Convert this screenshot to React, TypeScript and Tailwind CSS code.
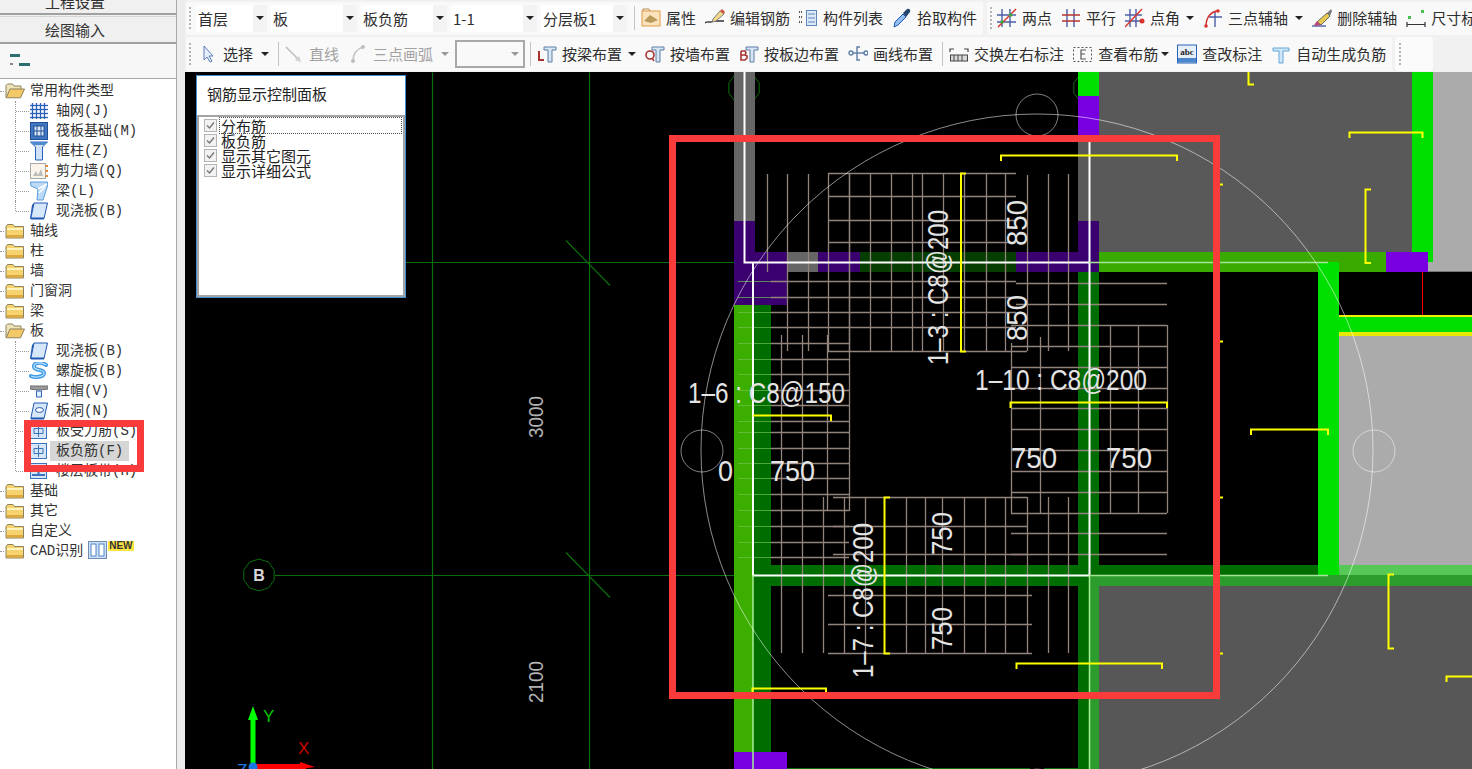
import React from "react";

const CJK = '"Noto Sans CJK SC", "Noto Sans", sans-serif';
const TREE = '"Liberation Mono", "Noto Sans CJK SC", monospace';

/* ---------- small icons ---------- */
const S = ({ children, w = 20, h = 20 }: { children: React.ReactNode; w?: number; h?: number }) => (
  <svg width={w} height={h} viewBox={`0 0 ${w} ${h}`} className="shrink-0 block" fill="none">{children}</svg>
);

const FolderClosed = () => (
  <svg width="20" height="16" viewBox="0 0 20 16" className="block shrink-0">
    <path d="M1 3.5 L2.5 1.5 H8 L9.5 3.5 H18.5 V15 H1 Z" fill="#f6d36f" stroke="#8d8260" strokeWidth="1" />
    <rect x="2" y="5" width="16" height="2" fill="#fff3bd" />
    <rect x="2" y="12" width="16" height="2.4" fill="#dca93a" />
  </svg>
);
const FolderOpen = () => (
  <svg width="20" height="16" viewBox="0 0 20 16" className="block shrink-0">
    <path d="M1 14.5 V2.5 L2.5 1 H7.5 L9 3 H16 V6" fill="#efe3b8" stroke="#8d8260" strokeWidth="1" />
    <path d="M1.2 14.8 L5 6 H19.5 L15.5 14.8 Z" fill="#f3c968" stroke="#8d8260" strokeWidth="1" />
  </svg>
);

const blue = "#2a62b8";
const TAxis = () => (
  <S w={18} h={18}>
    {[2, 6, 10, 14].map((x) => <path key={x} d={`M${x + .5} 1V17`} stroke={blue} strokeWidth="1.3" />)}
    {[3, 7, 11, 15].map((y) => <path key={y} d={`M0 ${y + .5}H18`} stroke={blue} strokeWidth="1.3" />)}
  </S>
);
const TRaft = () => (
  <S w={18} h={18}>
    <rect x=".5" y=".5" width="17" height="17" fill="#3f78c0" stroke="#204f96" />
    <rect x="4" y="4" width="10" height="10" fill="#dbe9f8" stroke="#204f96" />
    <path d="M7 4V14M11 4V14M4 9H14" stroke="#204f96" />
  </S>
);
const TColumn = () => (
  <S w={18} h={20}>
    <path d="M.5 1H17.5L12.5 6V19H5.5V6Z" fill="#cfe2f7" stroke="#2a62b8" />
    <path d="M.5 1H17.5L14 4H4Z" fill="#4d8ad2" />
  </S>
);
const TWall = () => (
  <S w={18} h={18}>
    <rect x=".5" y="1.5" width="15" height="15" fill="#fbf4ea" stroke="#a8a8a8" />
    <path d="M3 14L6 9L8 13L11 7L13 14Z" fill="#bdbdbd" />
    <path d="M15.5 4H18M15.5 9H18M15.5 14H18" stroke="#e08a3a" strokeWidth="2" />
  </S>
);
const TBeam = () => (
  <S w={18} h={20}>
    <path d="M.5 1H17.5V5L13 19H7L8 8L1 5Z" fill="#bcd9f6" stroke="#5a9de0" />
    <path d="M8 8L17 3M9 12L15 6" stroke="#ffffff" strokeWidth="1.5" />
  </S>
);
const TSlab = () => (
  <S w={18} h={18}>
    <path d="M4 1H17.5L14 16.5H.8Z" fill="#d7e7fa" stroke="#1f58b4" />
    <path d="M.8 16.5L4 1L2 3L0 17Z" fill="#1f58b4" />
    <path d="M1 16.5H14" stroke="#1f58b4" strokeWidth="2" />
  </S>
);
const TSpiral = () => (
  <S w={20} h={18}>
    <path d="M17 3C12 -1 4 1 5 5S15 7 15 11S6 16 2 14" stroke="#3f9be8" strokeWidth="4" strokeLinecap="round" />
    <path d="M17 3C12 -1 4 1 5 5S15 7 15 11S6 16 2 14" stroke="#bfe2fb" strokeWidth="1.2" />
  </S>
);
const TCap = () => (
  <S w={18} h={18}>
    <path d="M0 4H18V7L11 8H7L0 7Z" fill="#9a9a9a" stroke="#6d6d6d" />
    <path d="M6.5 9H11.5V15H6.5Z" fill="#e1eefc" stroke="#2a62b8" />
  </S>
);
const THole = () => (
  <S w={18} h={18}>
    <path d="M4 1H17.5L14 16.5H.8Z" fill="#d7e7fa" stroke="#1f58b4" />
    <ellipse cx="9.5" cy="8" rx="4" ry="2.4" fill="#fff" stroke="#1f58b4" />
    <path d="M1 16.5H14" stroke="#1f58b4" strokeWidth="2" />
  </S>
);
const TRebar = () => (
  <S w={18} h={18}>
    <rect x=".5" y="1.5" width="16" height="15" fill="#d5e6f8" stroke="#3a72bc" />
    <path d="M4 6.5H13V11.5H4ZM8.5 3V15" stroke="#3a72bc" />
  </S>
);
const TBand = () => (
  <S w={18} h={18}>
    <rect x=".5" y="1.5" width="16" height="15" fill="#d5e6f8" stroke="#3a72bc" />
    <path d="M2 5H15M2 13H15M8.5 5V13" stroke="#3a72bc" strokeWidth="2" />
  </S>
);

const G = ({ c, d, sw = 1.4 }: { c: string; d: string; sw?: number }) => <path d={d} stroke={c} strokeWidth={sw} fill="none" />;

const IProp = () => (
  <S>
    <rect x="1" y="3" width="18" height="15" fill="#fbe3bd" stroke="#e29a45" />
    <path d="M2 3V1H8L9 3" stroke="#b98a4a" />
    <path d="M3 13L9 7L17 12L10 15Z" fill="#b89a5a" />
  </S>
);
const IEdit = () => (
  <S w={21}>
    <G c="#333" d="M0 15C3 12 5 16 8 13L19 13" />
    <path d="M8 11L15 3L19 6L11 13L7 14Z" fill="#f0d78a" stroke="#7d7d7d" />
    <path d="M15 3L17 1L20 4L19 6Z" fill="#d0523c" />
  </S>
);
const IList = () => (
  <S>
    <path d="M1 4H4M1 9H4M1 14H4" stroke="#555" strokeDasharray="1 1" strokeWidth="2" />
    <rect x="8.5" y="2.5" width="10" height="15" fill="#dbe9f8" stroke="#5f86b8" />
    <path d="M10 6H17M10 10H17M10 14H17" stroke="#5f86b8" />
  </S>
);
const IPick = () => (
  <S>
    <path d="M2 19L3 14L11 6L14 9L6 17Z" fill="#8fc0f0" stroke="#1f58b4" />
    <path d="M11 5L15 1C17 0 19 2 18 4L14 9Z" fill="#27466f" />
  </S>
);
const ITwoPts = () => (
  <S>
    <G c="#4d5da8" d="M5 1V19M13 1V19M0 7H19M0 14H19" />
    <G c="#d8322b" d="M1 19L19 1" />
    <rect x="3.5" y="12.5" width="3" height="3" fill="#3caa3c" /><rect x="12" y="5.5" width="3" height="3" fill="#3caa3c" />
  </S>
);
const IParallel = () => (
  <S>
    <G c="#4d5da8" d="M6 1V19M13 1V19" /><G c="#b5362f" d="M1 7H19M1 13H19" />
  </S>
);
const IAngle = () => (
  <S>
    <G c="#4d5da8" d="M5 1V19M11 1V19M0 7H17M0 13H17" />
    <G c="#d8322b" d="M0 19L17 1" /><circle cx="17" cy="13" r="2.5" fill="#d8322b" />
  </S>
);
const IArc = () => (
  <S>
    <G c="#4d5da8" d="M12 4V19M6 9H19" />
    <G c="#d8322b" d="M3 18C3 9 8 4 14 3" />
    <circle cx="3" cy="18" r="1.8" fill="#d8322b" /><circle cx="15" cy="3" r="1.8" fill="#d8322b" />
  </S>
);
const IErase = () => (
  <S w={22}>
    <path d="M1 18H15" stroke="#4d5da8" strokeWidth="1.4" />
    <path d="M6 14L16 5L19 8L10 17Z" fill="#e8c84f" stroke="#666" />
    <path d="M16 5L20 1L21 3L19 8Z" fill="#7d7d7d" />
    <path d="M3 17L6 13L10 17L5 18Z" fill="#b64a78" />
  </S>
);
const IDim = () => (
  <S>
    <rect x="15" y="2" width="3" height="3" fill="#4cc24c" /><rect x="2" y="8" width="3" height="3" fill="#4cc24c" />
    <G c="#333" d="M1 14V19M19 14V19M1 16.5H19" sw={1.2} />
  </S>
);
const ISelect = () => (
  <S>
    <path d="M6 2L6 16L9 13L12 18L14 17L11 12L15 12Z" fill="#e4eefc" stroke="#5f7fb8" />
  </S>
);
const ILine = () => <S><G c="#bfbfbf" d="M2 3L16 17" sw={1.6} /><path d="M17 18L11 16L15 12Z" fill="#cfcfcf" /></S>;
const IArcMuted = () => (
  <S>
    <G c="#c4c4c4" d="M5 17C5 10 9 5 15 3" sw={1.6} />
    <circle cx="5" cy="17" r="2" fill="#bdbdbd" /><circle cx="15" cy="3" r="2" fill="#bdbdbd" />
  </S>
);
const Pillar = ({ ch, c = "#a83232" }: { ch: "L" | "Q" | "B"; c?: string }) => (
  <S>
    <path d="M7 3H19V6H15V18H11V6H7Z" fill="#d8e5f3" stroke="#5c7ea8" />
    {ch === "L" && <G c={c} d="M2 7V16H7" sw={2} />}
    {ch === "Q" && <><circle cx="5" cy="11" r="4" stroke={c} strokeWidth="1.6" /><G c={c} d="M7 14L9 17" /></>}
    {ch === "B" && <G c={c} d="M2 7V16H6L8 14V12L6 11H2M6 11L7 9L6 7H2" sw={1.6} />}
  </S>
);
const IDrawLine = () => (
  <S>
    <circle cx="3" cy="9" r="2" stroke="#5c7ea8" strokeWidth="1.4" /><circle cx="18" cy="9" r="2" stroke="#5c7ea8" strokeWidth="1.4" />
    <G c="#5c7ea8" d="M5 9H16" /><G c="#5c7ea8" d="M12 3H9V16H12" />
  </S>
);
const ISwap = () => (
  <S>
    <rect x="1.5" y="11" width="17" height="6" fill="#d9d9d9" stroke="#444" />
    <G c="#444" d="M5 11V17M9 11V17M13 11V17" sw={1} />
    <G c="#444" d="M1 8V5H5M19 8V5H15" sw={1.2} />
  </S>
);
const IView = () => (
  <S>
    <rect x=".5" y="3.5" width="18" height="14" stroke="#555" strokeDasharray="2 2" />
    <G c="#555" d="M13 6H8V15H13M8 10H12" sw={1.2} />
  </S>
);
const IAbc = () => (
  <svg width="20" height="20" viewBox="0 0 20 20" className="shrink-0 block">
    <rect x=".5" y="1" width="19" height="18" fill="#e5effa" stroke="#2a62b8" />
    <rect x="1" y="14" width="18" height="4.5" fill="#4b86cc" />
    <text x="10" y="11" textAnchor="middle" fontSize="9" fontWeight="700" fontFamily='"Liberation Serif", serif' fill="#1d1d1d">abc</text>
  </svg>
);
const IAuto = () => (
  <S>
    <path d="M2 4H18V7H12V19H8V7H2Z" fill="#cfe6f7" stroke="#62a7d8" />
  </S>
);

/* ---------- toolbar ---------- */
const Grip = ({ cls = "" }: { cls?: string }) => (
  <div className={`flex flex-col gap-[2px] w-[2px] shrink-0 ${cls}`}>
    {[0, 1, 2, 3, 4, 5].map((i) => <span key={i} className="block w-[2px] h-[2px] bg-[#b4b4b4]" />)}
  </div>
);
const Sep = ({ cls = "" }: { cls?: string }) => <div className={`w-px h-[24px] bg-[#c4c4c4] shrink-0 ${cls}`} />;
const Arrow = ({ muted = false, cls = "" }: { muted?: boolean; cls?: string }) => (
  <span className={`block w-0 h-0 border-x-[4px] border-x-transparent border-t-[4px] shrink-0 ${muted ? "border-t-[#999]" : "border-t-[#222]"} ${cls}`} />
);
const Tool = ({ icon, label, muted = false, arrow = "", arrowMuted = false }: { icon: React.ReactNode; label: string; muted?: boolean; arrow?: string; arrowMuted?: boolean }) => (
  <div className="flex items-center shrink-0">
    <div className="w-[20px] flex justify-center">{icon}</div>
    <span className={`ml-[5px] text-[15px] leading-[20px] whitespace-nowrap ${muted ? "text-[#a2a2a2]" : "text-[#2e2e2e]"}`}>{label}</span>
    {arrow && <Arrow muted={arrowMuted} cls={arrow} />}
  </div>
);
const Drop = ({ label, w }: { label: string; w: string }) => (
  <div className={`flex h-[27px] bg-white ${w}`}>
    <span className="flex-1 pl-[2px] text-[15px] leading-[27px] text-[#2e2e2e]">{label}</span>
    <span className="w-[14px] bg-[#f3f3f3] flex items-center justify-center"><Arrow /></span>
  </div>
);

const Toolbars = () => (
  <div className="h-[72px] shrink-0 bg-[#f1f1f1] overflow-hidden" style={{ fontFamily: CJK }}>
    <div className="h-[36px] flex items-center">
      <div className="ml-px pl-[3px] pr-[6px] h-[33px] flex items-center gap-[9px] bg-[#f9f9f9] rounded-[3px] shrink-0">
        <Grip cls="mr-[-4px]" />
        <div className="flex gap-[4px] mr-[-2px]">
          <Drop label="首层" w="w-[71px]" />
          <Drop label="板" w="w-[86px]" />
          <Drop label="板负筋" w="w-[86px]" />
          <Drop label="1-1" w="w-[86px]" />
          <Drop label="分层板1" w="w-[86px]" />
        </div>
        <Sep cls="mr-[-3px]" />
        <Tool icon={<IProp />} label="属性" />
        <Tool icon={<IEdit />} label="编辑钢筋" />
        <div className="ml-[-1px]"><Tool icon={<IList />} label="构件列表" /></div>
        <Tool icon={<IPick />} label="拾取构件" />
      </div>
      <div className="ml-[4px] pl-[3px] h-[33px] flex items-center gap-[9px] bg-[#f9f9f9] rounded-[3px] shrink-0">
        <Grip cls="mr-[-4px]" />
        <Tool icon={<ITwoPts />} label="两点" />
        <Tool icon={<IParallel />} label="平行" />
        <Tool icon={<IAngle />} label="点角" arrow="ml-[6px]" />
        <Tool icon={<IArc />} label="三点辅轴" arrow="ml-[7px]" />
        <Tool icon={<IErase />} label="删除辅轴" />
        <Tool icon={<IDim />} label="尺寸标注" />
      </div>
    </div>
    <div className="h-[36px] flex items-center">
      <div className="ml-px pl-[3px] pr-[6px] h-[34px] flex items-center gap-[9px] bg-[#f9f9f9] rounded-[3px] shrink-0">
        <Grip cls="mr-[-2px]" />
        <Tool icon={<ISelect />} label="选择" arrow="ml-[8px]" />
        <Sep cls="mr-[-4px]" />
        <Tool icon={<ILine />} label="直线" muted />
        <Tool icon={<IArcMuted />} label="三点画弧" muted arrow="ml-[8px]" arrowMuted />
        <div className="w-[70px] h-[28px] border-2 border-[#a8a8a8] bg-[#f9f9f9] flex items-center justify-end pr-[4px] mr-[-4px] ml-[-3px] shrink-0"><Arrow muted /></div>
        <Sep cls="mr-[-3px]" />
        <Tool icon={<Pillar ch="L" />} label="按梁布置" arrow="ml-[6px]" />
        <Tool icon={<Pillar ch="Q" />} label="按墙布置" />
        <Tool icon={<Pillar ch="B" />} label="按板边布置" />
        <Tool icon={<IDrawLine />} label="画线布置" />
        <Sep cls="mr-[-3px]" />
        <Tool icon={<ISwap />} label="交换左右标注" />
        <Tool icon={<IView />} label="查看布筋" arrow="ml-[3px]" />
        <div className="ml-[-1px]"><Tool icon={<IAbc />} label="查改标注" /></div>
        <Tool icon={<IAuto />} label="自动生成负筋" />
      </div>
      <div className="ml-[3px] pl-[4px] w-[38px] h-[34px] flex items-center bg-[#fbfbfb] rounded-[3px] shrink-0">
        <Grip />
      </div>
    </div>
  </div>
);

/* ---------- left tree ---------- */
type Child = { icon: React.ReactNode; label: string; selected?: boolean };
const Folder = ({ label, open = false }: { label: string; open?: boolean }) => (
  <div className="h-[20px] flex items-center">
    <span className="w-[4px] border-t border-dotted border-[#999] shrink-0" />
    <span className="ml-[1px]">{open ? <FolderOpen /> : <FolderClosed />}</span>
    <span className="ml-[5px] text-[14px] leading-[20px] text-[#333] whitespace-nowrap">{label}</span>
  </div>
);
const Kids = ({ items }: { items: Child[] }) => (
  <div>
    {items.map((it, i) => (
      <div key={it.label + i} className="h-[20px] flex items-center pl-[15px]">
        <span className={`w-0 border-l border-dotted border-[#999] shrink-0 self-start ${i === items.length - 1 ? "h-[10px]" : "h-[20px]"}`} />
        <span className="w-[13px] border-t border-dotted border-[#999] shrink-0" />
        <span className="w-[20px] flex justify-center shrink-0">{it.icon}</span>
        <span className={`ml-px w-[79px] pl-[6px] text-[14px] leading-[20px] text-[#333] whitespace-nowrap ${it.selected ? "bg-[#d6d6d6]" : ""}`}>{it.label}</span>
      </div>
    ))}
  </div>
);

const Sidebar = () => (
  <div className="w-[185px] shrink-0 h-full bg-[#f0f0f0] flex" style={{ fontFamily: TREE }}>
    <div className="w-[177px] h-full flex flex-col border-r border-[#a9a9a9]">
      <div className="h-[15px] overflow-hidden border-b-2 border-[#a0a0a0] bg-[#f0f0f0] flex items-end justify-center pr-[26px]">
        <span className="text-[15px] leading-[20px] text-[#333] translate-y-[-1px]" style={{ fontFamily: CJK }}>工程设置</span>
      </div>
      <div className="h-[28px] mt-px border-t border-[#d5d5d5] border-b-2 border-b-[#a0a0a0] bg-[#f0f0f0] flex items-center justify-center pr-[26px]">
        <span className="text-[15px] leading-[20px] text-[#333]" style={{ fontFamily: CJK }}>绘图输入</span>
      </div>
      <div className="h-[34px] bg-[#f7f7f7] flex items-center pl-[10px]">
        <svg width="22" height="14" viewBox="0 0 22 14"><rect y="0" width="10" height="3" fill="#2d6e6e" /><rect x="9" y="9" width="11" height="3" fill="#2d6e6e" /><rect x="0" y="9" width="3" height="2" fill="#888" /></svg>
      </div>
      <div className="flex-1 bg-white border-t border-[#a9a9a9] relative pt-[2px] overflow-hidden">
        <Folder label="常用构件类型" open />
        <Kids items={[
          { icon: <TAxis />, label: "轴网(J)" },
          { icon: <TRaft />, label: "筏板基础(M)" },
          { icon: <TColumn />, label: "框柱(Z)" },
          { icon: <TWall />, label: "剪力墙(Q)" },
          { icon: <TBeam />, label: "梁(L)" },
          { icon: <TSlab />, label: "现浇板(B)" },
        ]} />
        <Folder label="轴线" />
        <Folder label="柱" />
        <Folder label="墙" />
        <Folder label="门窗洞" />
        <Folder label="梁" />
        <Folder label="板" open />
        <Kids items={[
          { icon: <TSlab />, label: "现浇板(B)" },
          { icon: <TSpiral />, label: "螺旋板(B)" },
          { icon: <TCap />, label: "柱帽(V)" },
          { icon: <THole />, label: "板洞(N)" },
          { icon: <TRebar />, label: "板受力筋(S)" },
          { icon: <TRebar />, label: "板负筋(F)", selected: true },
          { icon: <TBand />, label: "楼层板带(H)" },
        ]} />
        <Folder label="基础" />
        <Folder label="其它" />
        <Folder label="自定义" />
        <div className="h-[20px] flex items-center">
          <span className="w-[4px] border-t border-dotted border-[#999] shrink-0" />
          <span className="ml-[1px]"><FolderClosed /></span>
          <span className="ml-[5px] text-[14px] leading-[20px] text-[#333] whitespace-nowrap">CAD识别</span>
          <span className="ml-[5px] mt-[-2px]">
            <svg width="19" height="18" viewBox="0 0 19 18" className="block"><rect x=".5" y=".5" width="18" height="17" fill="#cfe0f4" stroke="#6d8db5" /><rect x="3" y="3" width="5" height="12" fill="#fff" stroke="#4f86c6" /><rect x="11" y="3" width="5" height="12" fill="#fff" stroke="#4f86c6" /></svg>
          </span>
          <span className="self-start ml-px bg-[#ffe640] text-[10px] leading-[10px] font-bold text-[#333] px-px" style={{ fontFamily: '"Liberation Sans", sans-serif' }}>NEW</span>
        </div>
        {/* annotation drawn over the tree */}
        <div className="absolute left-[24px] top-[341px] w-[120px] h-[52px] border-[7px] border-[#f93b3b]" />
      </div>
    </div>
    <div className="flex-1 bg-[#ececec]" />
  </div>
);

/* ---------- CAD canvas (a drawing) ---------- */
const GRAY = "#595959", LIGHT = "#ababab", BRIGHT = "#00e000", MID = "#38aa00", DARK = "#006d00";
const PUR = "#7800e0", DPUR = "#3a0070", LINE = "#92837d", YEL = "#ffff00", GRID = "#0a6e0a";

const fills: [number, number, number, number, string][] = [
  [1099, 72, 313, 180, GRAY],
  [1433, 72, 39, 200, LIGHT],
  [1428, 252, 44, 20, LIGHT],
  [1412, 72, 21, 190, BRIGHT],
  [1099, 252, 287, 20, MID],
  [1386, 252, 42, 20, PUR],
  [1339, 336, 133, 229, LIGHT],
  [1339, 315, 133, 20, BRIGHT],
  [1318, 262, 21, 313, BRIGHT],
  [1099, 586, 373, 183, "#575757"],
  [1089, 575, 383, 11, "#2c9c2c"],
  [1339, 565, 133, 10, "#55c855"],
  [1089, 586, 10, 183, "#2c9c2c"],
  [1078, 586, 11, 183, DARK],
  [1078, 272, 21, 293, DARK],
  [753, 565, 565, 10, DARK],
  [753, 575, 336, 11, DARK],
  [1078, 72, 21, 24, BRIGHT],
  [1078, 96, 21, 39, PUR],
  [1078, 135, 21, 86, GRAY],
  [1078, 221, 21, 51, DPUR],
  [1016, 252, 62, 20, DPUR],
  [860, 252, 156, 20, "#063d00"],
  [818, 252, 42, 20, DPUR],
  [787, 252, 31, 20, "#666666"],
  [734, 72, 21, 149, "#666666"],
  [734, 221, 21, 31, DPUR],
  [734, 252, 53, 53, DPUR],
  [755, 252, 32, 20, DPUR],
  [734, 305, 19, 447, "#3cae00"],
  [753, 305, 18, 447, DARK],
  [734, 752, 53, 17, PUR],
];

const grid: [number, number, number, number][] = [
  [432, 72, 432, 769], [589, 72, 589, 769],
  [405, 262, 734, 262], [275, 575, 734, 575],
  [566, 240, 610, 285],
  [566, 552, 610, 597],
  [787, 768, 1030, 768], [1044, 768, 1472, 768],
];

const hl = (y: number, a: number, b: number): [number, number, number, number] => [a, y, b, y];
const vl = (x: number, a: number, b: number): [number, number, number, number] => [x, a, x, b];
const mesh: [number, number, number, number][] = [
  ...[828, 849, 870, 891, 912, 922, 943, 964, 986, 1005].map((x) => vl(x, 173, 351)),
  vl(767, 174, 272), vl(787, 174, 351), vl(808, 174, 351), vl(1027, 175, 351), vl(1048, 174, 351), vl(1068, 174, 351),
  ...[173, 196, 220, 242].map((y) => hl(y, 828, 1016)),
  hl(351, 828, 1027),
  ...[281, 297, 312, 327].map((y) => hl(y, 771, 1016)),
  hl(283, 1016, 1167), hl(304, 1016, 1167),
  ...[325, 346, 367, 388, 408, 429, 450, 471, 492, 513].map((y) => hl(y, 1011, 1167)),
  hl(533, 1011, 1167), hl(554, 1011, 1167),
  vl(1011, 343, 513), vl(1040, 337, 513), vl(1110, 325, 513), vl(1138, 325, 513), vl(1167, 325, 513),
  ...[343, 359, 374, 390, 405, 421, 432, 448, 463, 478, 494, 510].map((y) => hl(y, 771, 849)),
  ...[526, 542, 557].map((y) => hl(y, 771, 849)),
  vl(781, 335, 653), vl(802, 335, 653), vl(827, 335, 511), vl(849, 173, 511), vl(823, 497, 653),
  ...[844, 865, 906, 925, 942, 964, 985, 1005, 1027, 1048, 1068].map((x) => vl(x, 497, 653)),
  ...[497, 526, 554].map((y) => hl(y, 833, 1027)),
  ...[595, 624, 653].map((y) => hl(y, 828, 1032)),
];

const columnTicks = [281, 297, 312, 327, 343, 359, 374, 390, 405, 421, 432, 448, 463, 478, 494, 510, 526, 542, 557];

const yellow = [
  "M1001 161V155.5H1177V161", "M966 173.5H961V351.5H966", "M753 415.5H831V421", "M1010.5 408V402.5H1167V408",
  "M890 497.5H884.5V653.5H890", "M752.5 693V688.5H826V693", "M1016.5 669V663.5H1162V669",
  "M1349.5 138V132.5H1422.5V138", "M1371 189.5H1365.5V263H1371", "M1248.5 72V84.5H1254",
  "M1251 435V429.5H1328V435", "M1394 574.5H1388.5V648.5H1394", "M1446.5 682V676.5H1472",
  "M1220 184.5H1223", "M1220 341.5H1223", "M1220 497.5H1223", "M1220 653.5H1223",
];

const poly = (cx: number, cy: number, r: number, n: number) =>
  Array.from({ length: n }, (_, i) => {
    const a = (-90 + (i * 360) / n) * (Math.PI / 180);
    return `${(cx + r * Math.cos(a)).toFixed(1)},${(cy + r * Math.sin(a)).toFixed(1)}`;
  }).join(" ");

const FONT = '"Liberation Sans", Arial, sans-serif';
const T = ({ x, y, len, s, rot = false, fs = 30 }: { x: number; y: number; len: number; s: string; rot?: boolean; fs?: number }) => (
  <text x={x} y={y} fontFamily={FONT} fontSize={fs} fill="#e4e4e4" textLength={len} lengthAdjust="spacingAndGlyphs"
    transform={rot ? `rotate(-90 ${x} ${y})` : undefined}>{s}</text>
);

const CadDrawing = () => (
  <svg viewBox="185 72 1287 697" className="block w-full h-full" shapeRendering="auto">
    {grid.map((l, i) => <line key={i} x1={l[0] + (l[0] === l[2] ? .5 : 0)} y1={l[1] + .5} x2={l[2] + (l[0] === l[2] ? .5 : 0)} y2={l[3] + .5} stroke={GRID} strokeWidth="1.2" />)}
    <polygon points={poly(744, 88, 16, 10)} stroke={GRID} fill="none" />
    <polygon points={poly(1089, 88, 16, 10)} stroke={GRID} fill="none" />
    <polygon points={poly(259, 575, 16, 10)} stroke={GRID} fill="none" />
    <text x="259" y="581" textAnchor="middle" fontFamily={FONT} fontSize="16" fontWeight="700" fill="#d8d8d8">B</text>
    <line x1="1422.5" y1="272" x2="1422.5" y2="315" stroke="#ff0000" />

    {fills.map((f, i) => <rect key={i} x={f[0]} y={f[1]} width={f[2]} height={f[3]} fill={f[4]} />)}
    <rect x="1339" y="315" width="133" height="2" fill="#f0f000" />
    <rect x="1339" y="332" width="133" height="4" fill="#e8e800" />
    <rect x="1428" y="271" width="44" height="1" fill="#777" />

    {columnTicks.map((y) => <line key={y} x1="738" x2="771" y1={y + .5} y2={y + .5} stroke="#6fc04f" strokeOpacity=".7" />)}
    {mesh.map((l, i) => <line key={i} x1={l[0] + (l[0] === l[2] ? .5 : 0)} y1={l[1] + (l[1] === l[3] ? .5 : 0)} x2={l[2] + (l[0] === l[2] ? .5 : 0)} y2={l[3] + (l[1] === l[3] ? .5 : 0)} stroke={LINE} strokeWidth="1.3" />)}

    <path d="M744.5 72V262.5H1089.5M753 262V575.5H1089.5M1089.5 142V575" stroke="#ffffff" strokeWidth="2" fill="none" />
    <path d="M1089 262.5H1328M1089 575.5H1328" stroke="#a6e596" strokeWidth="1.5" fill="none" />
    <path d="M753 575V769M1089.5 575V769" stroke="#a6f096" strokeWidth="1.5" fill="none" />

    <circle cx="1037" cy="450" r="336" stroke="#ffffff" strokeOpacity=".55" fill="none" />
    <circle cx="702" cy="451" r="21" stroke="#ffffff" strokeOpacity=".5" fill="none" />
    <circle cx="1037" cy="115" r="21" stroke="#ffffff" strokeOpacity=".5" fill="none" />
    <circle cx="1374" cy="451" r="21" stroke="#ffffff" strokeOpacity=".5" fill="none" />
    <circle cx="1037" cy="790" r="21" stroke="#ffffff" strokeOpacity=".5" fill="none" />

    {yellow.map((d, i) => <path key={i} d={d} stroke={YEL} strokeWidth="2" fill="none" />)}

    <T x={688} y={403} len={157} s="1–6 : C8@150" />
    <T x={718} y={481} len={15} s="0" />
    <T x={770} y={481} len={45} s="750" />
    <T x={975} y={390} len={172} s="1–10 : C8@200" />
    <T x={1011} y={468} len={46} s="750" />
    <T x={1106} y={468} len={46} s="750" />
    <T x={948} y={365} len={155} s="1–3 : C8@200" rot />
    <T x={1027} y={246} len={46} s="850" rot />
    <T x={1027} y={341} len={46} s="850" rot />
    <T x={873} y={678} len={155} s="1–7 : C8@200" rot />
    <T x={952} y={555} len={43} s="750" rot />
    <T x={952} y={650} len={43} s="750" rot />
    <text x="543" y="438" fontFamily={FONT} fontSize="20" fill="#b4b4b4" textLength="42" lengthAdjust="spacingAndGlyphs" transform="rotate(-90 543 438)">3000</text>
    <text x="543" y="703" fontFamily={FONT} fontSize="20" fill="#b4b4b4" textLength="42" lengthAdjust="spacingAndGlyphs" transform="rotate(-90 543 703)">2100</text>

    {/* UCS axes */}
    <path d="M253 716V766" stroke="#00ff00" strokeWidth="5" />
    <path d="M253 706L258 720H248Z" fill="#00ff00" />
    <path d="M253 766.5H306" stroke="#ff0000" strokeWidth="5" />
    <path d="M300 762L315 767L300 769Z" fill="#ff0000" />
    <circle cx="253" cy="767" r="4.5" fill="#1a78e6" />
    <text x="263" y="722" fontFamily={FONT} fontSize="17" fill="#00c800">Y</text>
    <text x="298" y="754" fontFamily={FONT} fontSize="17" fill="#d00000">X</text>
    <text x="237" y="776" fontFamily={FONT} fontSize="17" fill="#1a78e6">Z</text>
  </svg>
);

/* ---------- floating panel ---------- */
const Check = ({ label, focus = false }: { label: string; focus?: boolean }) => (
  <div className="h-[15px] flex items-center pl-[5px]">
    <svg width="13" height="13" viewBox="0 0 13 13" className="shrink-0 block">
      <rect x=".5" y=".5" width="12" height="12" fill="#f2f2f2" stroke="#b4b4b4" />
      <path d="M3 6.5L5.5 9L10 3.5" stroke="#777" strokeWidth="1.4" fill="none" />
    </svg>
    <span className={`ml-[3px] h-[15px] text-[15px] leading-[15px] text-[#222] whitespace-nowrap pl-px ${focus ? "w-[181px] outline-1 outline-dotted outline-[#555]" : ""}`}>{label}</span>
  </div>
);

const Panel = () => (
  <div className="absolute left-[11px] top-[3px] w-[210px] h-[223px] bg-white border border-[#3d8fd6] flex flex-col" style={{ fontFamily: CJK }}>
    <div className="h-[39px] shrink-0 pl-[10px] pb-[2px] flex items-center text-[15px] text-[#222]">钢筋显示控制面板</div>
    <div className="flex-1 border-2 border-[#a4a4a8] pt-[1px]">
      <Check label="分布筋" focus />
      <Check label="板负筋" />
      <Check label="显示其它图元" />
      <Check label="显示详细公式" />
    </div>
  </div>
);

export default function App() {
  return (
    <div className="w-[1472px] h-[769px] flex overflow-hidden bg-white">
      <Sidebar />
      <div className="flex-1 min-w-0 flex flex-col">
        <Toolbars />
        <div className="relative flex-1 bg-black overflow-hidden">
          <CadDrawing />
          <Panel />
          <div className="absolute left-[484px] top-[63px] w-[551px] h-[564px] border-[7px] border-[#f93b3b]" />
        </div>
      </div>
    </div>
  );
}
